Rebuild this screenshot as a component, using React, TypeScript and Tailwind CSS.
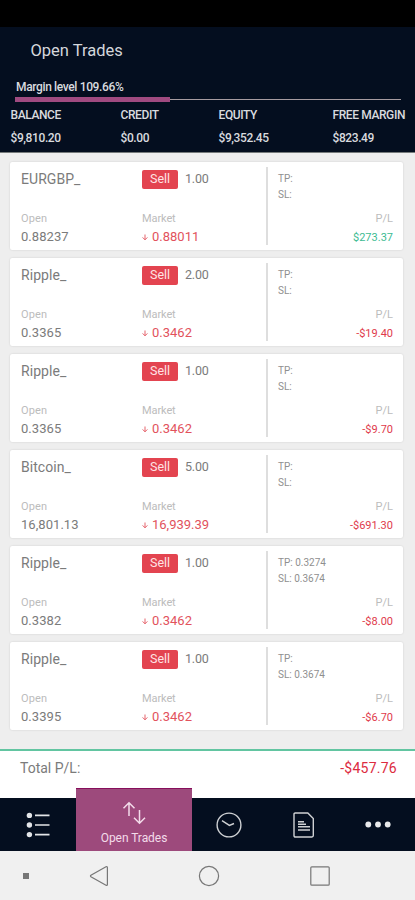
import React from 'react';

type Trade = {
  name: string;
  volume: string;
  open: string;
  market: string;
  tp?: string;
  sl?: string;
  pl: string;
};

const trades: Trade[] = [
  { name: 'EURGBP_', volume: '1.00', open: '0.88237', market: '0.88011', pl: '$273.37' },
  { name: 'Ripple_', volume: '2.00', open: '0.3365', market: '0.3462', pl: '-$19.40' },
  { name: 'Ripple_', volume: '1.00', open: '0.3365', market: '0.3462', pl: '-$9.70' },
  { name: 'Bitcoin_', volume: '5.00', open: '16,801.13', market: '16,939.39', pl: '-$691.30' },
  { name: 'Ripple_', volume: '1.00', open: '0.3382', market: '0.3462', tp: '0.3274', sl: '0.3674', pl: '-$8.00' },
  { name: 'Ripple_', volume: '1.00', open: '0.3395', market: '0.3462', sl: '0.3674', pl: '-$6.70' },
];

function Stat({ label, value }: { label: string; value: string }) {
  return (
    <div className="whitespace-nowrap text-[12px] font-medium leading-[23px] text-[#d9dbdf]">
      <div className="tracking-[-0.4px]">{label}</div>
      <div className="tracking-[-0.4px]">{value}</div>
    </div>
  );
}

function DownArrow() {
  return (
    <svg width="6" height="7" viewBox="0 0 6 7" className="mr-[4px] mt-px shrink-0" fill="none" stroke="#e2525c" strokeWidth="0.9">
      <path d="M3 0.5V5.8M0.6 3.4L3 5.8L5.4 3.4" />
    </svg>
  );
}

function TradeCard({ trade }: { trade: Trade }) {
  const loss = trade.pl.startsWith('-');
  return (
    <div className="flex h-[88px] rounded-[2px] bg-white pl-[11px] pr-[10px] text-[#7b7b7b] shadow-[0_0_2px_rgba(0,0,0,0.15)]">
      <div className="flex w-[121px] flex-col">
        <div className="mt-[7px] h-5 text-[14px] leading-5 tracking-[0.05px]">{trade.name}</div>
        <div className="mt-[22px] h-4 text-[11px] leading-4 tracking-[0.1px] text-[#bcbcbc]">Open</div>
        <div className="h-5 text-[13px] leading-5 tracking-[0.05px]">{trade.open}</div>
      </div>
      <div className="flex w-[124px] flex-col">
        <div className="mt-[7px] flex h-5 items-center">
          <span className="flex h-[19px] w-9 items-center justify-center rounded-[2px] bg-[#e34450] text-[12.5px] tracking-[-0.05px] text-[#ffe3e5]">
            Sell
          </span>
          <span className="ml-[7px] text-[12.5px] tracking-[-0.2px]">{trade.volume}</span>
        </div>
        <div className="mt-[22px] h-4 text-[11px] leading-4 tracking-[-0.1px] text-[#bcbcbc]">Market</div>
        <div className="flex h-5 items-center text-[13px] text-[#e2525c]">
          <DownArrow />
          {trade.market}
        </div>
      </div>
      <div className="my-[5px] w-0.5 bg-[#dedede]" />
      <div className="flex flex-1 flex-col pl-[10px]">
        <div className="mt-[9px] text-[10px] leading-4 text-[#8f8f8f]">
          <div>TP: {trade.tp}</div>
          <div>SL: {trade.sl}</div>
        </div>
        <div className="mt-[8px] h-4 text-right text-[11px] leading-4 text-[#bcbcbc]">P/L</div>
        <div className={`mt-px h-5 text-right text-[11px] leading-5 ${loss ? 'text-[#e03a4b]' : 'text-[#3dbb92]'}`}>{trade.pl}</div>
      </div>
    </div>
  );
}

export default function App() {
  return (
    <div className="flex h-[900px] w-[415px] flex-col overflow-hidden bg-[#eeeeee] font-[Roboto,sans-serif]">
      <div className="h-[27px] bg-black" />
      <header className="h-[126px] border-b border-[#767b7b] bg-[#040e1f]">
        <h1 className="pl-[30.5px] pt-[12px] text-[16.5px] font-normal leading-6 text-[#d5d7dc]">Open Trades</h1>
        <div className="mt-[15px] pl-4 text-[12px] font-medium leading-[18px] tracking-[-0.36px] text-[#d9dbdf]">Margin level 109.66%</div>
        <div className="ml-[15px] mr-[14px] mt-px flex h-[5px] items-center">
          <div className="h-[5px] w-[155px] bg-[#a04a80]" />
          <div className="h-px flex-1 bg-[#a69ba0]" />
        </div>
        <div className="mt-[2px] grid grid-cols-[110px_98px_114px_1fr] pl-[10.5px]">
          <Stat label="BALANCE" value="$9,810.20" />
          <Stat label="CREDIT" value="$0.00" />
          <Stat label="EQUITY" value="$9,352.45" />
          <Stat label="FREE MARGIN" value="$823.49" />
        </div>
      </header>

      <main className="flex h-[596px] flex-col gap-2 pl-[10px] pr-3 pt-[9px]">
        {trades.map((t, i) => (
          <TradeCard key={i} trade={t} />
        ))}
      </main>

      <div className="flex h-[39px] items-center justify-between border-t-2 border-[#62c5a1] bg-white pb-[2px] pl-5 pr-[18px] text-[14px] text-[#7b7b7b]">
        <span>Total P/L:</span>
        <span className="tracking-[0.25px] text-[#dc2b40]">-$457.76</span>
      </div>

      <nav className="flex h-[63px] items-end bg-[linear-gradient(#fff_0,#fff_10px,#040e1f_10px)]">
        <div className="flex h-[53px] w-[76px] items-center justify-center">
          <svg width="24" height="26" viewBox="0 0 24 26" fill="#e3e5e8">
            <circle cx="3.4" cy="3.4" r="2.7" />
            <circle cx="3.4" cy="13" r="2.7" />
            <circle cx="3.4" cy="22.6" r="2.7" />
            <path d="M9 2.6h14.5v1.6H9zM9 12.2h14.5v1.6H9zM9 21.8h14.5v1.6H9z" />
          </svg>
        </div>
        <div className="flex h-[63px] w-[116px] flex-col items-center border-t border-[#870e5c] bg-[#9d4a7c] text-[#f3dcea]">
          <svg width="24" height="24" viewBox="0 0 24 24" className="mt-[12px]" fill="none" stroke="currentColor" strokeWidth="1.5">
            <path d="M7 15V2M1.5 7.2L7 1.7L12.5 7.2M17.5 9V22M12 16.8L17.5 22.3L23 16.8" />
          </svg>
          <span className="mt-[5px] text-[12px] leading-4 tracking-[-0.05px]">Open Trades</span>
        </div>
        <div className="flex h-[53px] flex-1 items-center">
          <div className="flex w-[74px] justify-center">
            <svg width="26" height="26" viewBox="0 0 26 26" fill="none" stroke="#cfd1d4" strokeWidth="1.4">
              <circle cx="13" cy="13" r="11.9" />
              <path d="M6 8.7L13.4 13.4L18 11.5" />
            </svg>
          </div>
          <div className="flex w-[76px] justify-center">
            <svg width="22" height="26" viewBox="0 0 22 26" fill="none" stroke="#cfd1d4" strokeWidth="1.4">
              <path d="M2.2 1H14.8L20.3 6.6V23.6Q20.3 25 18.9 25H2.4Q1 25 1 23.6V2.2Q1 1 2.2 1Z" />
              <path d="M5 9.7H11M5 12.2H13M5 14.7H17M5 18H17" />
            </svg>
          </div>
          <div className="flex flex-1 justify-center pr-px">
            <svg width="26" height="7" viewBox="0 0 26 7" fill="#e8e9eb">
              <circle cx="3.3" cy="3.5" r="2.9" />
              <circle cx="13" cy="3.5" r="2.9" />
              <circle cx="22.7" cy="3.5" r="2.9" />
            </svg>
          </div>
        </div>
      </nav>

      <div className="flex h-[49px] items-center bg-[#f0f0f0]">
        <div className="ml-[23px] h-[6px] w-[6px] bg-[#777777]" />
        <svg width="20" height="22" viewBox="0 0 20 22" className="ml-[60px]" fill="none" stroke="#777777" strokeWidth="1.2">
          <path d="M17 1.8L1.9 10.3Q1 11 1.9 11.7L17 20.2Q18.4 20.8 18.4 19.4V2.6Q18.4 1.2 17 1.8Z" />
        </svg>
        <svg width="22" height="22" viewBox="0 0 22 22" className="ml-[89px]" fill="none" stroke="#777777" strokeWidth="1.2">
          <circle cx="11" cy="11" r="9.6" />
        </svg>
        <svg width="20" height="20" viewBox="0 0 20 20" className="ml-[90px]" fill="none" stroke="#777777" strokeWidth="1.2">
          <rect x="0.8" y="0.8" width="18.4" height="18.4" rx="1" />
        </svg>
      </div>
    </div>
  );
}
